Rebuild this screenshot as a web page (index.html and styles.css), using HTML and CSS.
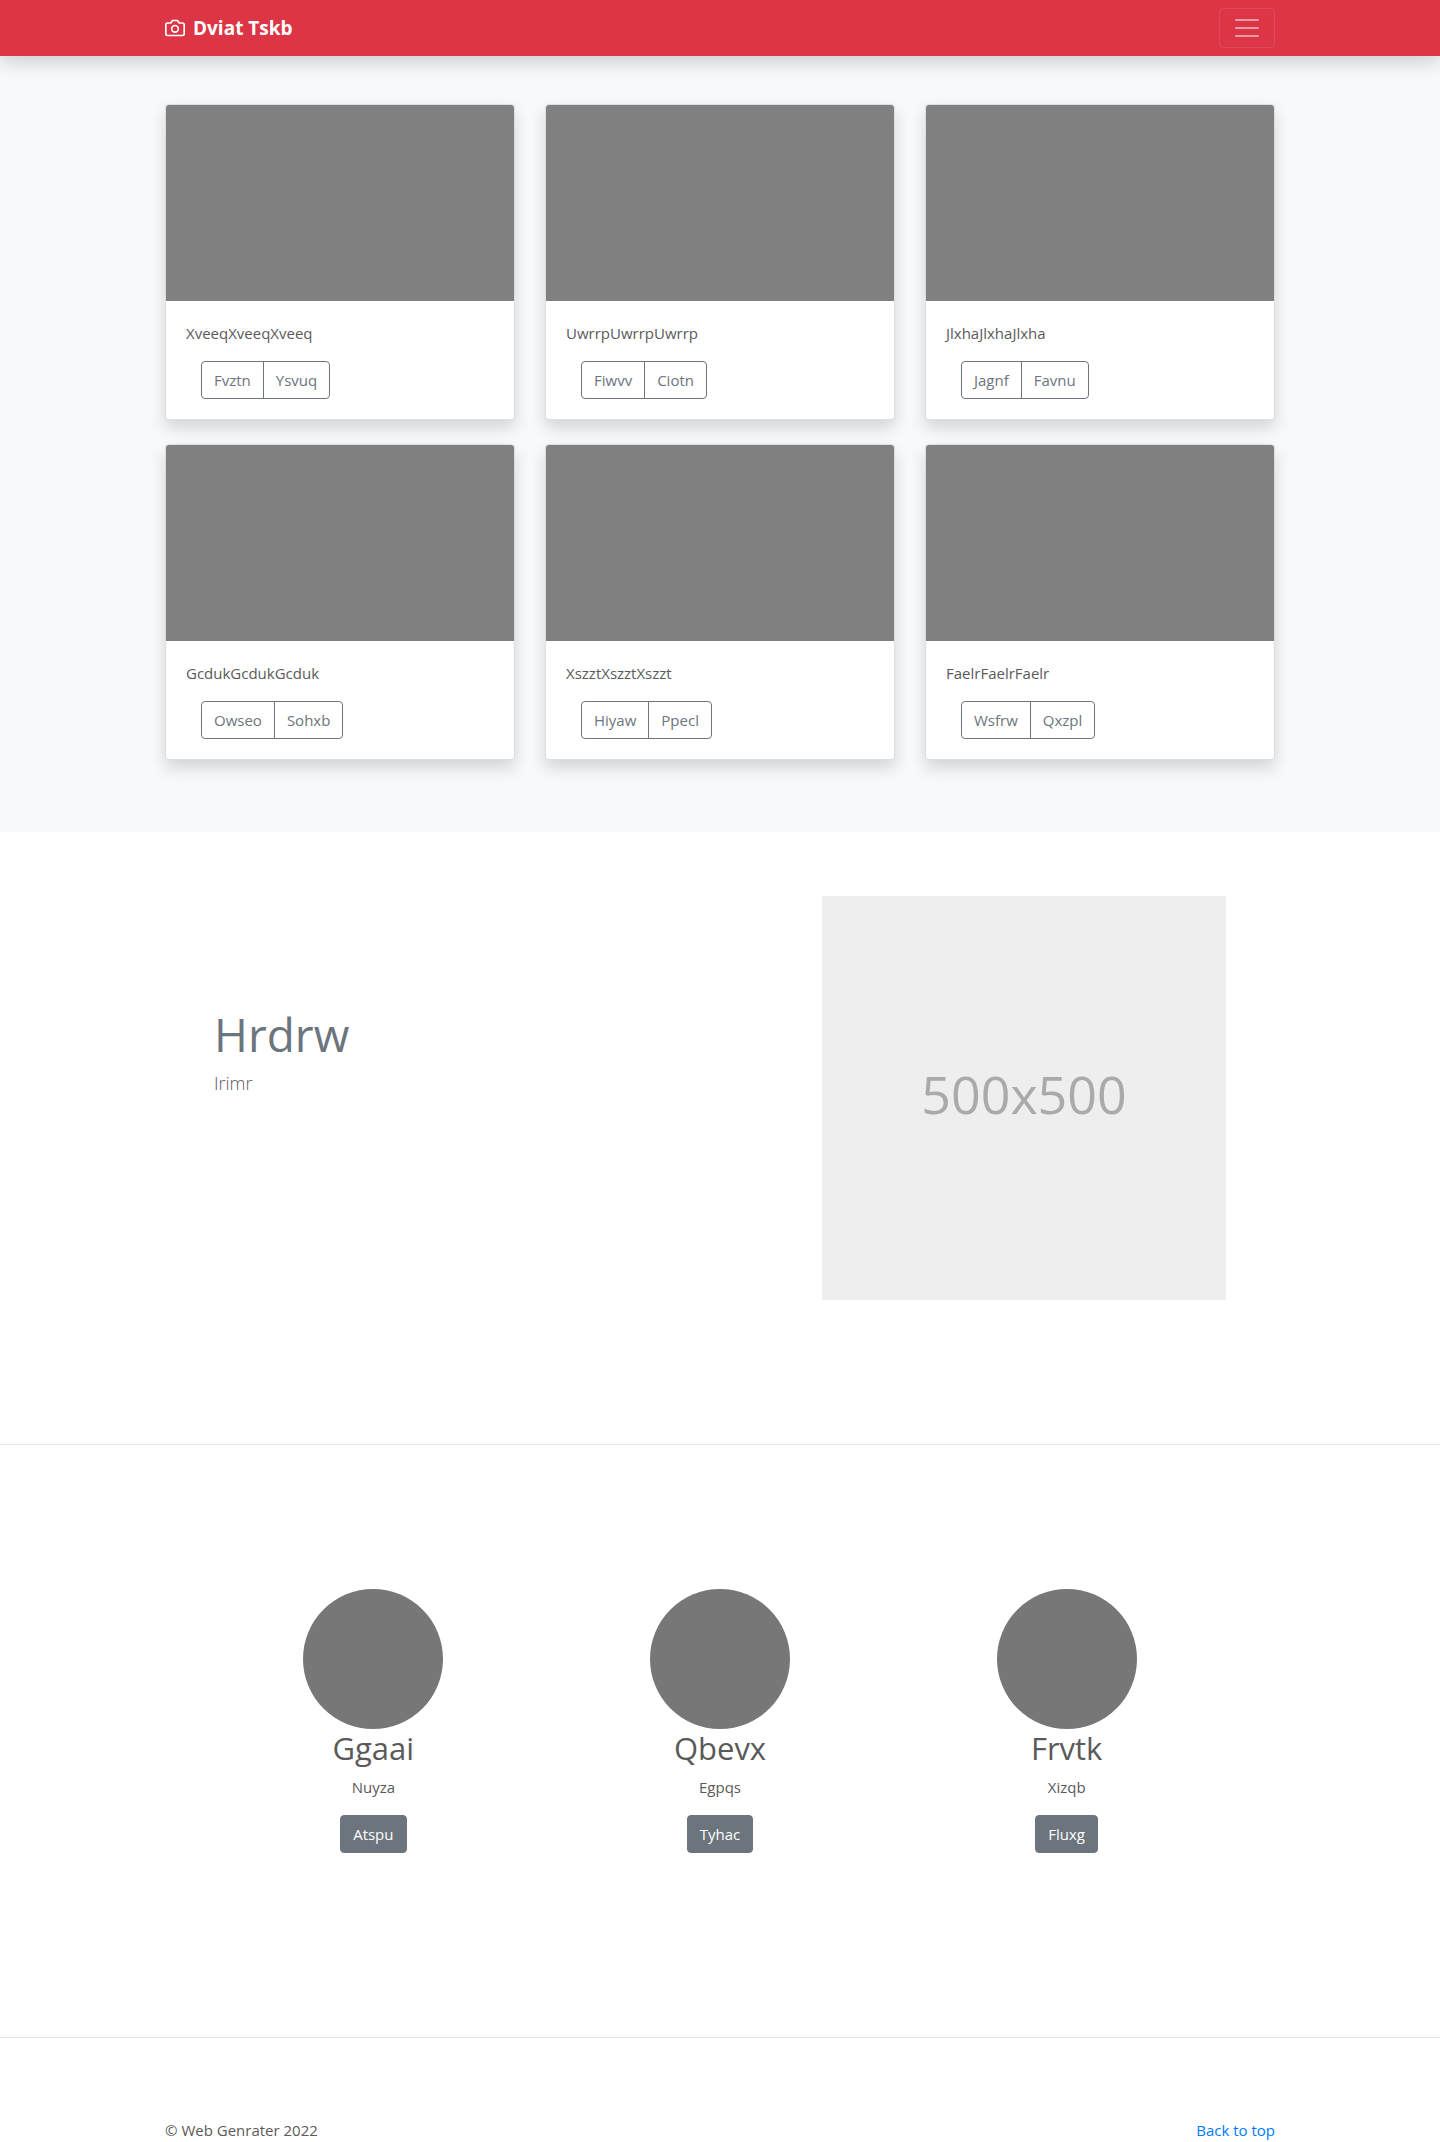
FILE: index.html
```html
<!DOCTYPE html>
<html lang="en">
<head>
<meta charset="utf-8">
<meta name="viewport" content="width=device-width, initial-scale=1">
<title>Dviat Tskb</title>
<link rel="stylesheet" href="styles.css">
</head>
<body id="top">
<header class="navbar">
  <div class="container navbar-inner">
    <a class="brand" href="#top">
      <svg class="brand-icon" viewBox="0 0 24 24" fill="none" stroke="currentColor" stroke-width="2" stroke-linecap="round" stroke-linejoin="round" aria-hidden="true"><path d="M23 19a2 2 0 0 1-2 2H3a2 2 0 0 1-2-2V8a2 2 0 0 1 2-2h4l2-3h6l2 3h4a2 2 0 0 1 2 2z"/><circle cx="12" cy="13" r="4"/></svg>
      <span>Dviat Tskb</span>
    </a>
    <button class="toggler" type="button" aria-label="Toggle navigation">
      <svg class="toggler-icon" viewBox="0 0 30 30" fill="none" stroke="currentColor" stroke-width="2" stroke-linecap="round" aria-hidden="true"><path d="M4 7h22M4 15h22M4 23h22"/></svg>
    </button>
  </div>
</header>
<main>
  <section class="album">
    <div class="container album-grid">
      <article class="card">
        <div class="card-image"></div>
        <div class="card-body">
          <p class="card-text">XveeqXveeqXveeq</p>
          <div class="btn-group"><button class="btn btn-outline" type="button">Fvztn</button><button class="btn btn-outline" type="button">Ysvuq</button></div>
        </div>
      </article>
      <article class="card">
        <div class="card-image"></div>
        <div class="card-body">
          <p class="card-text">UwrrpUwrrpUwrrp</p>
          <div class="btn-group"><button class="btn btn-outline" type="button">Fiwvv</button><button class="btn btn-outline" type="button">Ciotn</button></div>
        </div>
      </article>
      <article class="card">
        <div class="card-image"></div>
        <div class="card-body">
          <p class="card-text">JlxhaJlxhaJlxha</p>
          <div class="btn-group"><button class="btn btn-outline" type="button">Jagnf</button><button class="btn btn-outline" type="button">Favnu</button></div>
        </div>
      </article>
      <article class="card">
        <div class="card-image"></div>
        <div class="card-body">
          <p class="card-text">GcdukGcdukGcduk</p>
          <div class="btn-group"><button class="btn btn-outline" type="button">Owseo</button><button class="btn btn-outline" type="button">Sohxb</button></div>
        </div>
      </article>
      <article class="card">
        <div class="card-image"></div>
        <div class="card-body">
          <p class="card-text">XszztXszztXszzt</p>
          <div class="btn-group"><button class="btn btn-outline" type="button">Hiyaw</button><button class="btn btn-outline" type="button">Ppecl</button></div>
        </div>
      </article>
      <article class="card">
        <div class="card-image"></div>
        <div class="card-body">
          <p class="card-text">FaelrFaelrFaelr</p>
          <div class="btn-group"><button class="btn btn-outline" type="button">Wsfrw</button><button class="btn btn-outline" type="button">Qxzpl</button></div>
        </div>
      </article>
    </div>
  </section>
  <section class="container feature">
    <div class="feature-copy">
      <h2 class="feature-heading">Hrdrw</h2>
      <p class="lead">Irimr</p>
    </div>
    <div class="feature-media">
      <div class="placeholder">500x500</div>
    </div>
  </section>
  <hr class="divider">
  <section class="people">
    <div class="person">
      <div class="avatar"></div>
      <h2 class="person-name">Ggaai</h2>
      <p class="person-text">Nuyza</p>
      <a class="btn btn-solid" href="#top">Atspu</a>
    </div>
    <div class="person">
      <div class="avatar"></div>
      <h2 class="person-name">Qbevx</h2>
      <p class="person-text">Egpqs</p>
      <a class="btn btn-solid" href="#top">Tyhac</a>
    </div>
    <div class="person">
      <div class="avatar"></div>
      <h2 class="person-name">Frvtk</h2>
      <p class="person-text">Xizqb</p>
      <a class="btn btn-solid" href="#top">Fluxg</a>
    </div>
  </section>
  <hr class="divider">
</main>
<footer class="container footer">
  <span>© Web Genrater 2022</span>
  <a class="footer-link" href="#top">Back to top</a>
</footer>
</body>
</html>
```
FILE: styles.css
```css
*, *::before, *::after { box-sizing: border-box; }

body {
  margin: 0;
  background: #fff;
  color: #5a5a5a;
  font-family: "Segoe UI", "Open Sans", "Noto Sans", sans-serif;
  font-size: 15px;
  line-height: 24px;
}

h2, p { margin: 0; font-weight: 400; }

.container {
  width: 100%;
  max-width: 1140px;
  margin: 0 auto;
  padding: 0 15px;
}

/* Navigation bar */
.navbar {
  position: relative;
  padding: 8px 0;
  background: #dc3545;
  box-shadow: 0 8px 16px rgba(0, 0, 0, .15);
}
.navbar-inner {
  display: flex;
  align-items: center;
  justify-content: space-between;
}
.brand {
  display: flex;
  align-items: center;
  gap: 8px;
  color: #fff;
  font-size: 19px;
  font-weight: 700;
  text-decoration: none;
}
.brand-icon { width: 20px; height: 20px; }
.toggler {
  display: flex;
  padding: 4px 12px;
  border: 1px solid rgba(255, 255, 255, .1);
  border-radius: 4px;
  background: transparent;
  color: rgba(255, 255, 255, .5);
}
.toggler-icon { width: 30px; height: 30px; }

/* Card album */
.album { padding: 48px 0 72px; background: #f8f9fa; }
.album-grid {
  display: grid;
  grid-template-columns: repeat(3, 1fr);
  gap: 24px 30px;
}
.card {
  overflow: hidden;
  border: 1px solid rgba(0, 0, 0, .125);
  border-radius: 4px;
  background: #fff;
  box-shadow: 0 8px 16px rgba(0, 0, 0, .15);
}
.card-image { height: 196px; background: #808080; }
.card-body { padding: 20px; }
.card-text { margin-bottom: 16px; }

/* Buttons */
.btn {
  display: inline-block;
  padding: 6px 12px;
  border: 1px solid #6c757d;
  border-radius: 4px;
  font: inherit;
  text-align: center;
  text-decoration: none;
}
.btn-outline { background: transparent; color: #6c757d; }
.btn-solid { background: #6c757d; color: #fff; }
.btn-group { display: flex; padding-left: 15px; }
.btn-group .btn:first-child { border-radius: 4px 0 0 4px; }
.btn-group .btn:last-child { margin-left: -1px; border-radius: 0 4px 4px 0; }

/* Feature row */
.feature {
  display: grid;
  grid-template-columns: 7fr 5fr;
  padding: 64px 48px;
}
.feature-copy { padding: 112px 16px 0; }
.feature-media { padding: 0 16px 0 15px; }
.feature-heading {
  margin-bottom: 8px;
  color: #6c757d;
  font-size: 46px;
  line-height: 52px;
}
.lead { font-size: 18px; font-weight: 300; line-height: 30px; }
.placeholder {
  display: flex;
  align-items: center;
  justify-content: center;
  aspect-ratio: 1;
  padding-bottom: 8px;
  background: #eee;
  color: #aaa;
  font-size: 52px;
}

.divider {
  margin: 80px 0;
  border: 0;
  border-top: 1px solid rgba(0, 0, 0, .1);
}

/* People */
.people {
  display: grid;
  grid-template-columns: repeat(3, 1fr);
  max-width: 1040px;
  margin: 0 auto;
  padding: 64px 0 104px;
}
.person { text-align: center; }
.avatar {
  width: 140px;
  height: 140px;
  margin: 0 auto;
  border-radius: 50%;
  background: #777;
}
.person-name { margin-bottom: 8px; font-size: 31px; line-height: 38px; }
.person-text { margin-bottom: 16px; }

.footer { display: flex; justify-content: space-between; }
.footer-link { color: #007bff; text-decoration: none; }
```
